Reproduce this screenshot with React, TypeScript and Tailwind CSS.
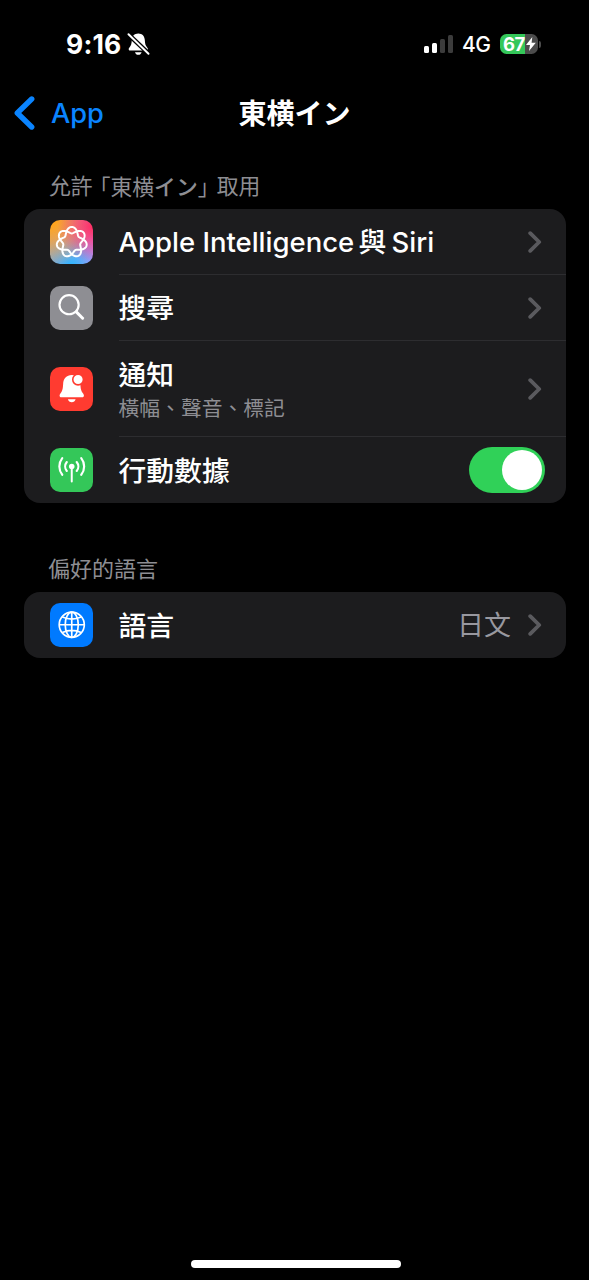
import type { ReactNode } from 'react';
import { clsx } from 'clsx';

// Seven-lobed rosette that goes round twice before it closes
const rosette = (() => {
  const points: string[] = [];
  for (let i = 0; i < 280; i++) {
    const t = (i / 280) * Math.PI * 4;
    const r = 12.1 + 3.3 * Math.cos(3.5 * t);
    points.push(`${(22 + r * Math.sin(t)).toFixed(2)} ${(22.4 - r * Math.cos(t)).toFixed(2)}`);
  }
  return `M${points.join('L')}Z`;
})();

const IntelligenceIcon = () => (
  <svg viewBox="0 0 44 44" className="size-full">
    <path d={rosette} fill="none" stroke="white" strokeWidth="2" strokeLinejoin="round" />
  </svg>
);

const SearchIcon = () => (
  <svg viewBox="0 0 44 44" className="size-full" fill="none" stroke="white" strokeLinecap="round">
    <circle cx="19.3" cy="18.9" r="9.7" strokeWidth="2.2" />
    <path d="M26.6 26.2L33 32.6" strokeWidth="3" />
  </svg>
);

const NotificationIcon = () => (
  <svg viewBox="0 0 44 44" className="size-full">
    <path
      d="M22 8c-5.300 0-8.500 3.800-8.700 9-.2 5.200-.9 7.400-2.400 9.400-.9 1.200-1.200 1.800-1.200 2.600 0 .9.600 1.500 1.600 1.500h21.400c1 0 1.600-.6 1.600-1.500 0-.8-.3-1.400-1.200-2.600-1.500-2-2.200-4.200-2.400-9.400C30.500 11.800 27.300 8 22 8z"
      fill="white"
    />
    <path d="M18.100 32.500h7.800c-.5 1.900-2 3.100-3.900 3.100s-3.400-1.200-3.900-3.100z" fill="white" />
    <circle cx="28.400" cy="12.700" r="5.400" fill="white" stroke="#ff3b30" strokeWidth="1.6" />
  </svg>
);

const CellularIcon = () => (
  <svg viewBox="0 0 44 44" className="size-full" fill="none" stroke="white" strokeLinecap="round">
    <circle cx="22" cy="18.700" r="2.800" fill="white" stroke="none" />
    <path d="M22 20v14" strokeWidth="2" />
    <path d="M17 14.200a7 7 0 0 0 0 9M27 14.200a7 7 0 0 1 0 9" strokeWidth="2.2" />
    <path d="M12.400 10.300a13.500 13.500 0 0 0 0 16.800M31.600 10.300a13.500 13.500 0 0 1 0 16.800" strokeWidth="2.2" />
  </svg>
);

const GlobeIcon = () => (
  <svg viewBox="0 0 44 44" className="size-full" fill="none" stroke="white" strokeWidth="1.7">
    <circle cx="22" cy="22" r="12.700" />
    <ellipse cx="22" cy="22" rx="6.600" ry="12.700" />
    <path d="M22 9.200v25.600M9.200 22h25.600M12.500 14.200c5.800 2.500 13.200 2.500 19 0M12.500 29.800c5.800-2.500 13.200-2.500 19 0" />
  </svg>
);

const Chevron = () => (
  <svg viewBox="0 0 14 22" className="h-[22px] w-[14px] shrink-0">
    <path d="M2.200 2.200L11.200 11L2.200 19.800" fill="none" stroke="#5a5a5e" strokeWidth="3.800" strokeLinecap="round" strokeLinejoin="round" />
  </svg>
);

const StatusBar = () => (
  <div className="flex h-[88px] items-start pt-[32px] pr-[48px] pl-[66px] text-white">
    <span className="w-[59px] font-['Inter'] text-[26.500px] leading-6 font-bold tracking-[0.200px]">9:16</span>
    <svg viewBox="0 0 24 24" className="ml-0.5 size-6 shrink-0">
      <path
        d="M11.300 1.500c-4 0-6.300 2.800-6.500 6.500-.2 4-.8 5.500-2 7-.9 1.200-1.100 1.600-1.100 2.200 0 .8.600 1.300 1.400 1.300h16.400c.8 0 1.400-.5 1.400-1.300 0-.6-.2-1-1.100-2.200-1.200-1.500-1.800-3-2-7-.2-3.700-2.500-6.500-6.500-6.500z"
        fill="white"
      />
      <path d="M8 20.200h6.600c-.4 1.600-1.700 2.600-3.300 2.600S8.400 21.800 8 20.200z" fill="white" />
      <path d="M1.200 2.200L22.200 22.200" stroke="black" strokeWidth="4.600" />
      <path d="M1.500 2.200L21.500 21.700" stroke="white" strokeWidth="2" strokeLinecap="round" />
    </svg>
    <div className="mt-[3px] ml-auto flex h-[18px] items-end gap-[3px]">
      <span className="h-[7px] w-[5px] rounded-[1.500px] bg-white" />
      <span className="h-[10px] w-[5px] rounded-[1.500px] bg-white" />
      <span className="h-[14px] w-[5px] rounded-[1.500px] bg-[#3c3c3c]" />
      <span className="h-[18px] w-[5px] rounded-[1.500px] bg-[#3c3c3c]" />
    </div>
    <span className="ml-[9px] w-[29px] font-['Inter'] text-[21px] leading-[26px] font-medium tracking-[-0.500px]">4G</span>
    <div className="mt-[2px] ml-[9px] flex items-center gap-px">
      <div className="flex h-5 w-[38px] items-center rounded-[6.500px] bg-linear-to-r from-[#34c759] from-67% to-[#4b4b4b] to-67% pl-[3px]">
        <span className="w-[23px] font-['Inter'] text-[18.500px] leading-5 font-bold tracking-[-0.500px]">67</span>
        <svg viewBox="0 0 10 14" className="h-[14px] w-[10px] shrink-0">
          <path d="M6.300 0L0 8h4L3 14l6.800-8.300H5.600z" fill="white" />
        </svg>
      </div>
      <span className="h-[7px] w-[2px] rounded-r-full bg-[#4b4b4b]" />
    </div>
  </div>
);

const NavBar = () => (
  <header className="grid h-[50px] grid-cols-[1fr_auto_1fr] items-center px-[14px]">
    <a href="#" className="flex items-center text-[#0a84ff]">
      <svg viewBox="0 0 21 34" className="h-[34px] w-[21px]">
        <path d="M17.700 3L3.300 17L17.700 31" fill="none" stroke="currentColor" strokeWidth="5.400" strokeLinecap="round" strokeLinejoin="round" />
      </svg>
      <span className="ml-4 pt-0.5 font-['Inter'] text-[27.200px] leading-8 font-medium">App</span>
    </a>
    <h1 className="pb-0.5 font-['Noto_Sans_CJK_JP',sans-serif] text-[28px] leading-8 font-bold text-white">東横イン</h1>
  </header>
);

const Card = ({ children }: { children: ReactNode }) => (
  <div className="overflow-hidden rounded-[16px] bg-[#1c1c1e]">{children}</div>
);

interface RowProps {
  icon: ReactNode;
  color: string;
  title: ReactNode;
  subtitle?: string;
  trailing?: ReactNode;
  last?: boolean;
}

const Row = ({ icon, color, title, subtitle, trailing = <Chevron />, last }: RowProps) => (
  <div className={clsx('flex items-stretch pl-[25.500px]', subtitle ? 'h-24' : 'h-[66px]')}>
    <div className={clsx('size-[43.500px] shrink-0 self-center overflow-hidden rounded-[10px]', color)}>{icon}</div>
    <div className={clsx('ml-[25.500px] flex flex-1 items-center justify-between pr-[24px]', !last && 'border-b border-[#2d2d30]')}>
      <div className={clsx(subtitle && 'pt-[5px]', last && 'pt-0.5')}>
        <div className="text-[27.800px] leading-9 font-medium text-white">{title}</div>
        {subtitle && <div className="text-[20.800px] leading-8 text-[#8e8e93]">{subtitle}</div>}
      </div>
      {trailing}
    </div>
  </div>
);

const App = () => {
  return (
    <div className="flex h-[1280px] w-[589px] flex-col overflow-hidden bg-black font-['Inter','Noto_Sans_CJK_TC',sans-serif]">
      <StatusBar />
      <NavBar />

      <main className="flex-1 pr-[23px] pl-[24px]">
        <h2 className="mt-[32px] flex h-8 items-center pl-[25px] text-[21.800px] text-[#8e8e93]">
          <span>允許</span>
          <span className="ml-[7px] font-['Noto_Sans_CJK_JP',sans-serif] [font-feature-settings:'halt']">
            「東横<span className="font-medium">イン</span>」
          </span>
          <span className="ml-2">取用</span>
        </h2>
        <div className="mt-[7px]">
          <Card>
            <Row
              icon={<IntelligenceIcon />}
              color="bg-[radial-gradient(circle_at_100%_15%,#ff2d60_0%,#ff2d6000_62%),radial-gradient(circle_at_0%_0%,#ffa51f_10%,#ffa51f00_75%),radial-gradient(circle_at_50%_105%,#35b5ff_5%,#35b5ff00_65%),linear-gradient(90deg,#b5a5b5,#d68cff)]"
              title={
                <span className="flex items-center">
                  <span className="w-[240px] text-[27.500px]">Apple Intelligence</span>
                  <span className="w-[33px]">與</span>
                  <span className="text-[27.500px]">Siri</span>
                </span>
              }
            />
            <Row icon={<SearchIcon />} color="bg-[#8e8e93]" title="搜尋" />
            <Row icon={<NotificationIcon />} color="bg-[#ff3b30]" title="通知" subtitle="橫幅、聲音、標記" />
            <Row
              icon={<CellularIcon />}
              color="bg-[#34c759]"
              title="行動數據"
              last
              trailing={
                <button role="switch" aria-checked="true" className="-mr-[3px] flex h-[46px] w-[76px] items-center justify-end rounded-full bg-[#30d158] pr-[3px]">
                  <span className="size-10 rounded-full bg-white" />
                </button>
              }
            />
          </Card>
        </div>

        <h2 className="mt-[50px] flex h-8 items-center pl-6 text-[22px] text-[#8e8e93]">偏好的語言</h2>
        <div className="mt-[7px]">
          <Card>
            <Row
              icon={<GlobeIcon />}
              color="bg-[#007aff]"
              title="語言"
              last
              trailing={
                <span className="flex items-center gap-[17px] text-[27px] leading-9 text-[#98989f]">
                  <span className="pt-px">日文</span>
                  <Chevron />
                </span>
              }
            />
          </Card>
        </div>
      </main>

      <div className="mb-3 ml-0.5 h-2 w-[210px] self-center rounded-full bg-white" />
    </div>
  );
};

export default App;
